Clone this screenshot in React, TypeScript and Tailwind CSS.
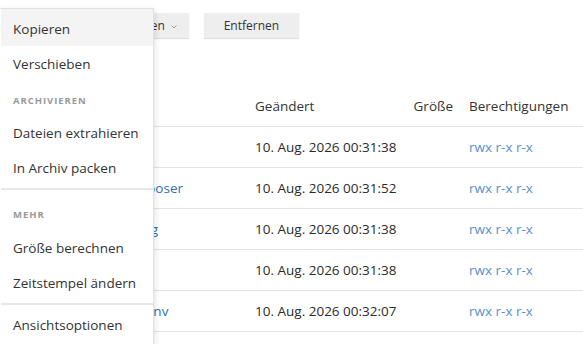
import React from "react";

const rows = [
  { name: "bin", date: "10. Aug. 2026 00:31:38" },
  { name: "composer", date: "10. Aug. 2026 00:31:52" },
  { name: "config", date: "10. Aug. 2026 00:31:38" },
  { name: "logs", date: "10. Aug. 2026 00:31:38" },
  { name: "site.env", date: "10. Aug. 2026 00:32:07" },
];

function Item({ label, extra }: { label: string; extra?: string }) {
  return (
    <div
      className={
        "flex items-center pl-[12px] text-[13.5px] text-[#333] whitespace-nowrap " +
        (extra ?? "h-[35px]")
      }
    >
      {label}
    </div>
  );
}

export default function App() {
  return (
    <div
      className="relative w-[583px] h-[344px] overflow-hidden bg-white text-[#333]"
      style={{ fontFamily: '"Open Sans", "Noto Sans", sans-serif' }}
    >
      {/* toolbar */}
      <div className="flex items-start pt-[13px] pl-[101px] gap-[15px]">
        <button className="h-[25px] flex items-center pl-[14px] pr-[12px] bg-[#eeeeee] shadow-[0_1px_1px_rgba(0,0,0,0.12)] text-[12px] text-[#333]">
          Aktionen
          <svg width="6" height="4" viewBox="0 0 6 4" className="ml-[6px] mt-[2px]">
            <path d="M0.5 0.5 L3 3 L5.5 0.5" fill="none" stroke="#999" strokeWidth="1" />
          </svg>
        </button>
        <button className="h-[25px] w-[95px] flex items-center justify-center bg-[#eeeeee] shadow-[0_1px_1px_rgba(0,0,0,0.12)] text-[12px] text-[#333]">
          Entfernen
        </button>
      </div>

      {/* table */}
      <div className="mt-[48px] text-[13.5px]">
        <div className="h-[41px] flex items-center border-b border-[#e3e3e3]">
          <div className="w-[255px] pl-[100px]">Name</div>
          <div className="w-[150px]">Geändert</div>
          <div className="w-[48px] text-right whitespace-nowrap">Größe</div>
          <div className="pl-[16px]">Berechtigungen</div>
        </div>
        {rows.map((r) => (
          <div key={r.name} className="h-[41px] flex items-center border-b border-[#e3e3e3]">
            <div className="w-[255px] pl-[120px] text-[#2f6fb8]">{r.name}</div>
            <div className="w-[150px] text-[#2b2b2b] whitespace-nowrap">{r.date}</div>
            <div className="w-[48px]" />
            <div className="pl-[16px] text-[#5a8fcb]">rwx r-x r-x</div>
          </div>
        ))}
      </div>

      {/* dropdown menu */}
      <div className="absolute left-[-2px] top-[8px] w-[156px] h-[360px] bg-white border border-[#e2e2e2] shadow-[1px_2px_6px_rgba(0,0,0,0.12)] pl-[2px]">
        <Item label="Kopieren" extra="h-[37px] pt-[4px] bg-[#f4f4f4]" />
        <Item label="Verschieben" extra="h-[35px] pt-[2px]" />
        <div className="pl-[12px] pt-[14px] pb-[9px] text-[9.5px] leading-[12px] font-bold tracking-[0.1em] text-[#999]">
          ARCHIVIEREN
        </div>
        <Item label="Dateien extrahieren" />
        <Item label="In Archiv packen" />
        <div className="mt-[2px] h-[2px] bg-[#e8e8e8]" />
        <div className="pl-[12px] pt-[19px] pb-[10px] text-[9.5px] leading-[12px] font-bold tracking-[0.1em] text-[#999]">
          MEHR
        </div>
        <Item label="Größe berechnen" />
        <Item label="Zeitstempel ändern" />
        <div className="mt-[2px] mb-[3px] h-[2px] bg-[#e8e8e8]" />
        <Item label="Ansichtsoptionen" />
      </div>
    </div>
  );
}
